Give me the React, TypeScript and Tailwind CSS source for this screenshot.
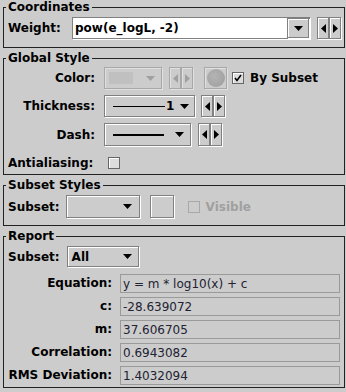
import React from "react";

type Dir = "down" | "left" | "right";

function Tri({ dir, color = "#000" }: { dir: Dir; color?: string }) {
  if (dir === "down")
    return (
      <svg width="9" height="5" viewBox="0 0 9 5">
        <polygon points="0,0 9,0 4.5,5" fill={color} />
      </svg>
    );
  if (dir === "left")
    return (
      <svg width="5" height="9" viewBox="0 0 5 9">
        <polygon points="5,0 5,9 0,4.5" fill={color} />
      </svg>
    );
  return (
    <svg width="5" height="9" viewBox="0 0 5 9">
      <polygon points="0,0 0,9 5,4.5" fill={color} />
    </svg>
  );
}

const etched = "border border-[#808080] shadow-[inset_1px_1px_0_#fff,1px_1px_0_#fff]";
const etchedOff = "border border-[#a8a8a8] shadow-[inset_1px_1px_0_#e0e0e0,1px_1px_0_#e0e0e0]";

function ArrowPair({ h, disabled }: { h: string; disabled?: boolean }) {
  const c = disabled ? "#a0a0a0" : "#000";
  const b = disabled ? etchedOff : etched;
  return (
    <div className="flex shrink-0">
      <div className={`flex w-[12px] items-center justify-center ${h} ${b}`}>
        <Tri dir="left" color={c} />
      </div>
      <div className={`flex w-[12px] items-center justify-center ${h} ${b}`}>
        <Tri dir="right" color={c} />
      </div>
    </div>
  );
}

function Group({ title, className, children }: { title: string; className: string; children: React.ReactNode }) {
  return (
    <fieldset className={`ml-[3px] mr-[1px] border border-[#222] px-[2px] ${className}`}>
      <legend className="px-[2px] text-[12px] leading-[15px] font-bold text-black">{title}</legend>
      {children}
    </fieldset>
  );
}

function CheckBox({ checked, disabled }: { checked?: boolean; disabled?: boolean }) {
  return (
    <div
      className={`flex h-[12px] w-[12px] shrink-0 items-center justify-center ${
        disabled ? "border border-[#a8a8a8]" : "border border-[#666] bg-[#dcdcdc] shadow-[inset_1px_1px_0_#fff]"
      }`}
    >
      {checked && (
        <svg width="8" height="8" viewBox="0 0 8 8">
          <path d="M1 4 L3 6.5 L7 1" stroke="#000" strokeWidth="1.6" fill="none" />
        </svg>
      )}
    </div>
  );
}

const reportRows: [string, string][] = [
  ["Equation:", "y = m * log10(x) + c"],
  ["c:", "-28.639072"],
  ["m:", "37.606705"],
  ["Correlation:", "0.6943082"],
  ["RMS Deviation:", "1.4032094"],
];

export default function App() {
  return (
    <div className="flex h-[392px] w-[346px] flex-col gap-[3px] bg-[#cccccc] font-['DejaVu_Sans',sans-serif] text-[12px] text-black">
      <Group title="Coordinates" className="pt-[2px] pb-[8px]">
        <div className="flex items-center">
          <span className="ml-[2px] w-[64px] font-bold">Weight:</span>
          <div className={`flex h-[22px] w-[238px] ${etched} shadow-[1px_1px_0_#fff]`}>
            <div className="flex flex-1 items-center bg-white pl-[2px] font-bold">pow(e_logL, -2)</div>
            <div className={`flex w-[22px] items-center justify-center ${etched}`}>
              <Tri dir="down" />
            </div>
          </div>
          <div className="ml-[7px]">
            <ArrowPair h="h-[22px]" />
          </div>
        </div>
      </Group>

      <Group title="Global Style" className="pt-[1px]">
        <div className="grid grid-cols-[87px_1fr] items-center gap-x-[9px] gap-y-[6px] pl-[2px]">
          <span className="text-right font-bold">Color:</span>
          <div className="flex h-[22px] items-center">
            <div className={`flex h-[22px] w-[58px] items-center justify-between pl-[4px] pr-[6px] ${etchedOff}`}>
              <div className="h-[12px] w-[24px] bg-[#c0c0c0]" />
              <Tri dir="down" color="#a0a0a0" />
            </div>
            <div className="ml-[7px]">
              <ArrowPair h="h-[22px]" disabled />
            </div>
            <div className={`ml-[11px] flex h-[22px] w-[23px] items-center justify-center ${etchedOff}`}>
              <div className="h-[18px] w-[18px] rounded-full bg-[radial-gradient(circle_at_40%_40%,#b4b4b4,#9c9c9c)]" />
            </div>
            <div className="ml-[5px]">
              <CheckBox checked />
            </div>
            <span className="ml-[6px] font-bold">By Subset</span>
          </div>

          <span className="text-right font-bold">Thickness:</span>
          <div className="flex h-[22px] items-center">
            <div className={`flex h-[22px] w-[91px] items-center pl-[8px] pr-[5px] ${etched}`}>
              <div className="h-px w-[52px] bg-black" />
              <span className="ml-px font-bold">1</span>
              <span className="ml-auto">
                <Tri dir="down" />
              </span>
            </div>
            <div className="ml-[6px]">
              <ArrowPair h="h-[22px]" />
            </div>
          </div>

          <span className="text-right font-bold">Dash:</span>
          <div className="flex h-[23px] items-center">
            <div className={`flex h-[23px] w-[87px] items-center pl-[8px] pr-[6px] ${etched}`}>
              <div className="h-[2px] w-[51px] bg-black" />
              <span className="ml-auto">
                <Tri dir="down" />
              </span>
            </div>
            <div className="ml-[7px]">
              <ArrowPair h="h-[23px]" />
            </div>
          </div>

          <span className="font-bold">Antialiasing:</span>
          <div className="flex h-[22px] items-center pl-[4px]">
            <CheckBox />
          </div>
        </div>
      </Group>

      <Group title="Subset Styles" className="pt-[2px] pb-[7px]">
        <div className="flex items-center pl-[2px]">
          <span className="font-bold">Subset:</span>
          <div className={`ml-[6px] flex h-[23px] w-[74px] items-center justify-end pr-[7px] ${etched}`}>
            <Tri dir="down" />
          </div>
          <div className={`ml-[10px] h-[23px] w-[24px] ${etched}`} />
          <div className="ml-[14px]">
            <CheckBox disabled />
          </div>
          <span className="ml-[6px] font-bold text-[#a0a0a0]">Visible</span>
        </div>
      </Group>

      <Group title="Report" className="pt-[2px] pb-[2px]">
        <div className="flex items-center pl-[2px]">
          <span className="font-bold">Subset:</span>
          <div className={`ml-[7px] flex h-[21px] w-[72px] items-center pl-[4px] pr-[6px] ${etched}`}>
            <span className="font-bold">All</span>
            <span className="ml-auto">
              <Tri dir="down" />
            </span>
          </div>
        </div>
        <div className="mt-[7px] grid grid-cols-[104px_1fr] gap-x-[8px] gap-y-[4px] pl-[2px] pr-[2px]">
          {reportRows.map(([k, v]) => (
            <React.Fragment key={k}>
              <span className="text-right font-bold leading-[19px]">{k}</span>
              <div className="flex h-[19px] items-center border border-[#9a9a9a] pl-[2px] text-[#222233]">{v}</div>
            </React.Fragment>
          ))}
        </div>
      </Group>
    </div>
  );
}
